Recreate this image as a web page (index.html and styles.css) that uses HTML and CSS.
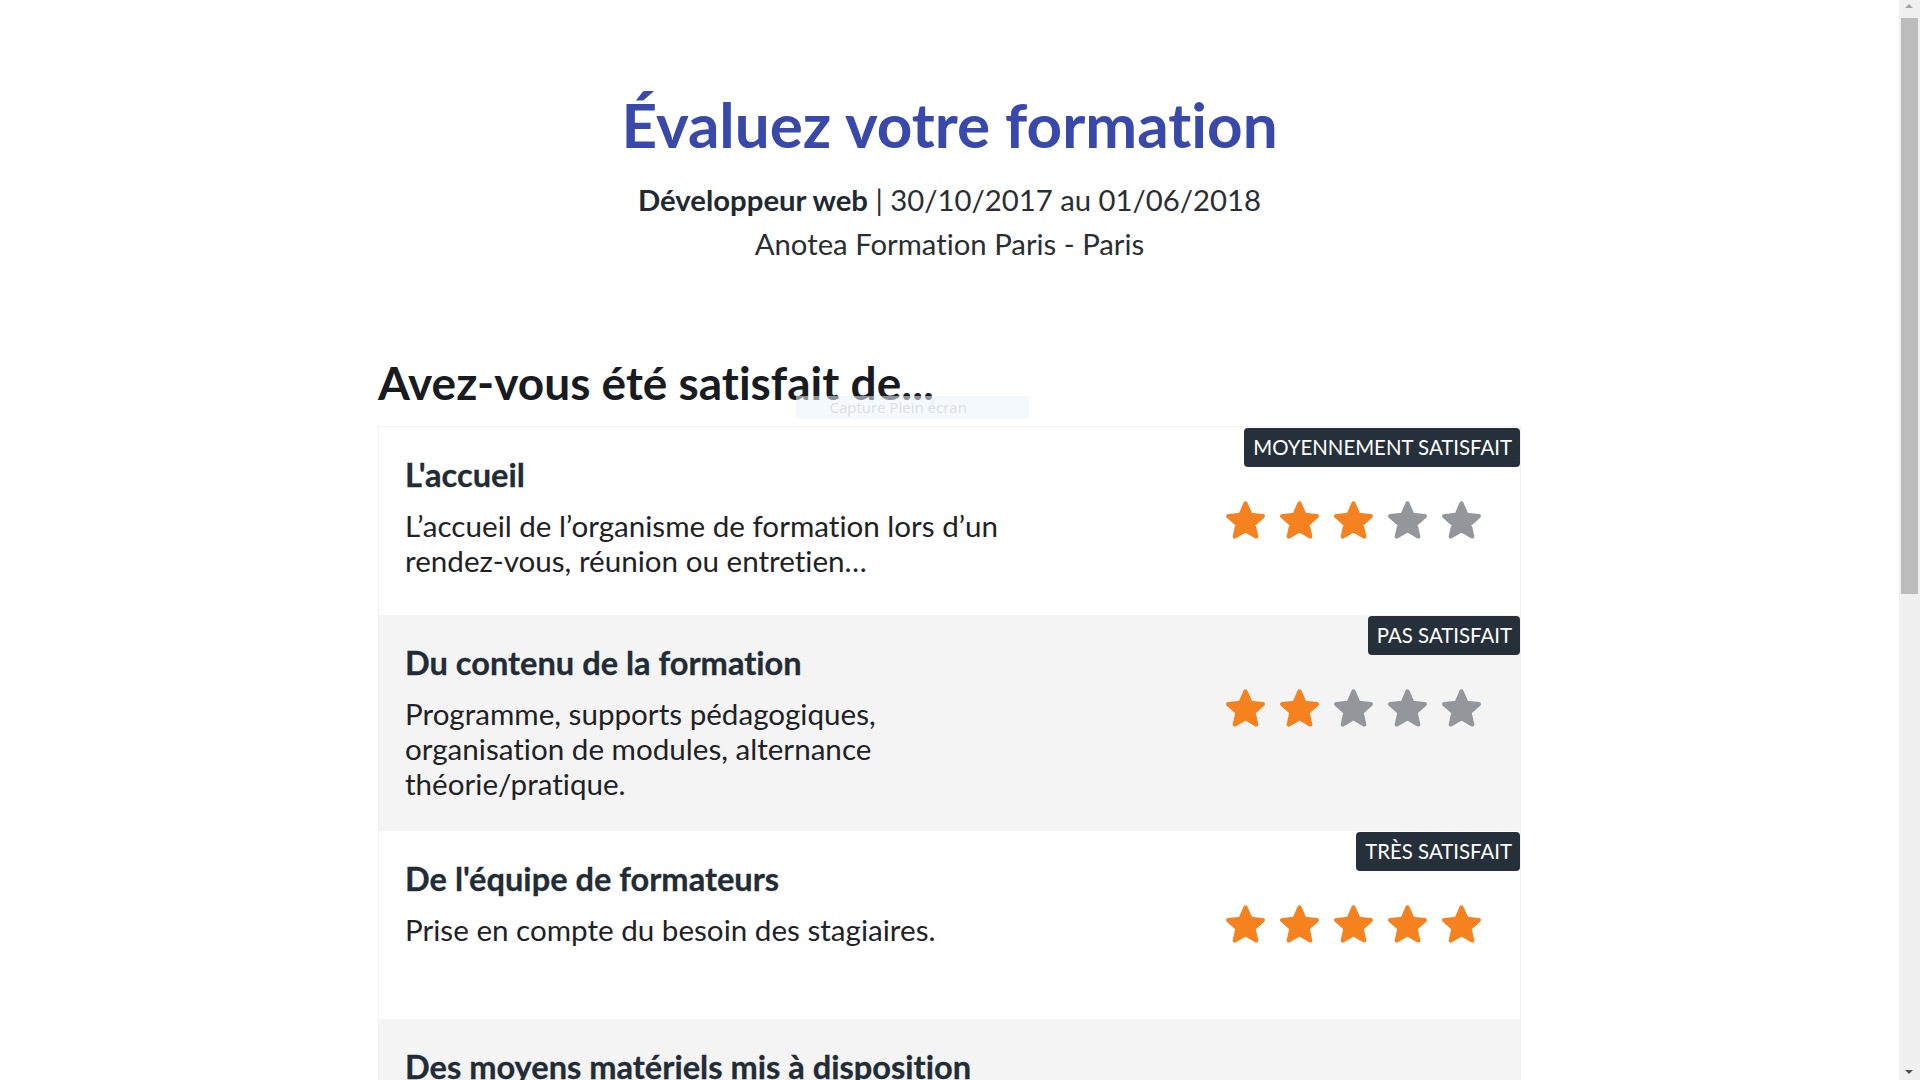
FILE: index.html
```html
<!DOCTYPE html>
<html lang="fr">
<head>
<meta charset="utf-8">
<title>Évaluez votre formation</title>
<link rel="stylesheet" href="styles.css">
</head>
<body>
<div class="page">
  <header class="intro">
    <h1 class="title">Évaluez votre formation</h1>
    <p class="subtitle"><strong>Développeur web</strong> | 30/10/2017 au 01/06/2018</p>
    <p class="subtitle">Anotea Formation Paris - Paris</p>
  </header>

  <main class="container">
    <h2 class="section-title">Avez-vous été satisfait de...</h2>

    <div class="card">
      <div class="row">
        <div class="row-text">
          <h3 class="row-title">L'accueil</h3>
          <p class="row-desc">L’accueil de l’organisme de formation lors d’un rendez-vous, réunion ou entretien…</p>
        </div>
        <span class="badge">MOYENNEMENT SATISFAIT</span>
        <div class="stars">
          <svg class="star on" viewBox="-10.75 -11.25 21.5 20.6"><path d="M0 -10L2.704 -3.721L9.511 -3.09L4.375 1.421L5.878 8.09L0 4.6L-5.878 8.09L-4.375 1.421L-9.511 -3.09L-2.704 -3.721Z"/></svg>
          <svg class="star on" viewBox="-10.75 -11.25 21.5 20.6"><path d="M0 -10L2.704 -3.721L9.511 -3.09L4.375 1.421L5.878 8.09L0 4.6L-5.878 8.09L-4.375 1.421L-9.511 -3.09L-2.704 -3.721Z"/></svg>
          <svg class="star on" viewBox="-10.75 -11.25 21.5 20.6"><path d="M0 -10L2.704 -3.721L9.511 -3.09L4.375 1.421L5.878 8.09L0 4.6L-5.878 8.09L-4.375 1.421L-9.511 -3.09L-2.704 -3.721Z"/></svg>
          <svg class="star" viewBox="-10.75 -11.25 21.5 20.6"><path d="M0 -10L2.704 -3.721L9.511 -3.09L4.375 1.421L5.878 8.09L0 4.6L-5.878 8.09L-4.375 1.421L-9.511 -3.09L-2.704 -3.721Z"/></svg>
          <svg class="star" viewBox="-10.75 -11.25 21.5 20.6"><path d="M0 -10L2.704 -3.721L9.511 -3.09L4.375 1.421L5.878 8.09L0 4.6L-5.878 8.09L-4.375 1.421L-9.511 -3.09L-2.704 -3.721Z"/></svg>
        </div>
      </div>

      <div class="row alt">
        <div class="row-text">
          <h3 class="row-title">Du contenu de la formation</h3>
          <p class="row-desc">Programme, supports pédagogiques, organisation de modules, alternance théorie/pratique.</p>
        </div>
        <span class="badge">PAS SATISFAIT</span>
        <div class="stars">
          <svg class="star on" viewBox="-10.75 -11.25 21.5 20.6"><path d="M0 -10L2.704 -3.721L9.511 -3.09L4.375 1.421L5.878 8.09L0 4.6L-5.878 8.09L-4.375 1.421L-9.511 -3.09L-2.704 -3.721Z"/></svg>
          <svg class="star on" viewBox="-10.75 -11.25 21.5 20.6"><path d="M0 -10L2.704 -3.721L9.511 -3.09L4.375 1.421L5.878 8.09L0 4.6L-5.878 8.09L-4.375 1.421L-9.511 -3.09L-2.704 -3.721Z"/></svg>
          <svg class="star" viewBox="-10.75 -11.25 21.5 20.6"><path d="M0 -10L2.704 -3.721L9.511 -3.09L4.375 1.421L5.878 8.09L0 4.6L-5.878 8.09L-4.375 1.421L-9.511 -3.09L-2.704 -3.721Z"/></svg>
          <svg class="star" viewBox="-10.75 -11.25 21.5 20.6"><path d="M0 -10L2.704 -3.721L9.511 -3.09L4.375 1.421L5.878 8.09L0 4.6L-5.878 8.09L-4.375 1.421L-9.511 -3.09L-2.704 -3.721Z"/></svg>
          <svg class="star" viewBox="-10.75 -11.25 21.5 20.6"><path d="M0 -10L2.704 -3.721L9.511 -3.09L4.375 1.421L5.878 8.09L0 4.6L-5.878 8.09L-4.375 1.421L-9.511 -3.09L-2.704 -3.721Z"/></svg>
        </div>
      </div>

      <div class="row">
        <div class="row-text">
          <h3 class="row-title">De l'équipe de formateurs</h3>
          <p class="row-desc">Prise en compte du besoin des stagiaires.</p>
        </div>
        <span class="badge">TRÈS SATISFAIT</span>
        <div class="stars">
          <svg class="star on" viewBox="-10.75 -11.25 21.5 20.6"><path d="M0 -10L2.704 -3.721L9.511 -3.09L4.375 1.421L5.878 8.09L0 4.6L-5.878 8.09L-4.375 1.421L-9.511 -3.09L-2.704 -3.721Z"/></svg>
          <svg class="star on" viewBox="-10.75 -11.25 21.5 20.6"><path d="M0 -10L2.704 -3.721L9.511 -3.09L4.375 1.421L5.878 8.09L0 4.6L-5.878 8.09L-4.375 1.421L-9.511 -3.09L-2.704 -3.721Z"/></svg>
          <svg class="star on" viewBox="-10.75 -11.25 21.5 20.6"><path d="M0 -10L2.704 -3.721L9.511 -3.09L4.375 1.421L5.878 8.09L0 4.6L-5.878 8.09L-4.375 1.421L-9.511 -3.09L-2.704 -3.721Z"/></svg>
          <svg class="star on" viewBox="-10.75 -11.25 21.5 20.6"><path d="M0 -10L2.704 -3.721L9.511 -3.09L4.375 1.421L5.878 8.09L0 4.6L-5.878 8.09L-4.375 1.421L-9.511 -3.09L-2.704 -3.721Z"/></svg>
          <svg class="star on" viewBox="-10.75 -11.25 21.5 20.6"><path d="M0 -10L2.704 -3.721L9.511 -3.09L4.375 1.421L5.878 8.09L0 4.6L-5.878 8.09L-4.375 1.421L-9.511 -3.09L-2.704 -3.721Z"/></svg>
        </div>
      </div>

      <div class="row alt">
        <div class="row-text">
          <h3 class="row-title">Des moyens matériels mis à disposition</h3>
          <p class="row-desc">Salles de cours, documentation, plateaux techniques, équipement informatique…</p>
        </div>
        <div class="stars">
          <svg class="star" viewBox="-10.75 -11.25 21.5 20.6"><path d="M0 -10L2.704 -3.721L9.511 -3.09L4.375 1.421L5.878 8.09L0 4.6L-5.878 8.09L-4.375 1.421L-9.511 -3.09L-2.704 -3.721Z"/></svg>
          <svg class="star" viewBox="-10.75 -11.25 21.5 20.6"><path d="M0 -10L2.704 -3.721L9.511 -3.09L4.375 1.421L5.878 8.09L0 4.6L-5.878 8.09L-4.375 1.421L-9.511 -3.09L-2.704 -3.721Z"/></svg>
          <svg class="star" viewBox="-10.75 -11.25 21.5 20.6"><path d="M0 -10L2.704 -3.721L9.511 -3.09L4.375 1.421L5.878 8.09L0 4.6L-5.878 8.09L-4.375 1.421L-9.511 -3.09L-2.704 -3.721Z"/></svg>
          <svg class="star" viewBox="-10.75 -11.25 21.5 20.6"><path d="M0 -10L2.704 -3.721L9.511 -3.09L4.375 1.421L5.878 8.09L0 4.6L-5.878 8.09L-4.375 1.421L-9.511 -3.09L-2.704 -3.721Z"/></svg>
          <svg class="star" viewBox="-10.75 -11.25 21.5 20.6"><path d="M0 -10L2.704 -3.721L9.511 -3.09L4.375 1.421L5.878 8.09L0 4.6L-5.878 8.09L-4.375 1.421L-9.511 -3.09L-2.704 -3.721Z"/></svg>
        </div>
      </div>

      <div class="row">
        <div class="row-text">
          <h3 class="row-title">De l'accompagnement</h3>
          <p class="row-desc">Accompagnement, suivi et conseils de l’organisme pendant la formation.</p>
        </div>
        <div class="stars">
          <svg class="star" viewBox="-10.75 -11.25 21.5 20.6"><path d="M0 -10L2.704 -3.721L9.511 -3.09L4.375 1.421L5.878 8.09L0 4.6L-5.878 8.09L-4.375 1.421L-9.511 -3.09L-2.704 -3.721Z"/></svg>
          <svg class="star" viewBox="-10.75 -11.25 21.5 20.6"><path d="M0 -10L2.704 -3.721L9.511 -3.09L4.375 1.421L5.878 8.09L0 4.6L-5.878 8.09L-4.375 1.421L-9.511 -3.09L-2.704 -3.721Z"/></svg>
          <svg class="star" viewBox="-10.75 -11.25 21.5 20.6"><path d="M0 -10L2.704 -3.721L9.511 -3.09L4.375 1.421L5.878 8.09L0 4.6L-5.878 8.09L-4.375 1.421L-9.511 -3.09L-2.704 -3.721Z"/></svg>
          <svg class="star" viewBox="-10.75 -11.25 21.5 20.6"><path d="M0 -10L2.704 -3.721L9.511 -3.09L4.375 1.421L5.878 8.09L0 4.6L-5.878 8.09L-4.375 1.421L-9.511 -3.09L-2.704 -3.721Z"/></svg>
          <svg class="star" viewBox="-10.75 -11.25 21.5 20.6"><path d="M0 -10L2.704 -3.721L9.511 -3.09L4.375 1.421L5.878 8.09L0 4.6L-5.878 8.09L-4.375 1.421L-9.511 -3.09L-2.704 -3.721Z"/></svg>
        </div>
      </div>
    </div>

    <div class="actions">
      <button class="btn" type="button">Suivant</button>
    </div>
  </main>

  <div class="capture">Capture Plein écran</div>
</div>

<div class="scrollbar" aria-hidden="true">
  <span class="sb-arrow up"></span>
  <span class="sb-thumb"></span>
  <span class="sb-arrow down"></span>
</div>
</body>
</html>
```
FILE: styles.css
```css
html, body {
  margin: 0;
  padding: 0;
  background: #ffffff;
}

body {
  font-family: "Lato", "Noto Sans", sans-serif;
  font-variant-ligatures: no-common-ligatures;
  color: #212529;
}

.page {
  position: relative;
  margin-right: 21px;
  padding-top: 87px;
  padding-bottom: 330px;
}

.intro {
  text-align: center;
}

.title {
  margin: 0;
  font-size: 62px;
  line-height: 1.2;
  font-weight: 700;
  color: #3949ab;
}

.subtitle {
  margin: 0;
  font-size: 29.3px;
  line-height: 44px;
  color: #2a2e33;
}
.title + .subtitle {
  margin-top: 17px;
}
.subtitle strong {
  font-weight: 700;
  color: #212830;
}

.container {
  width: 1143px;
  margin: 0 auto;
}

.section-title {
  margin: 89px 0 15px;
  font-size: 46px;
  line-height: 1.2;
  font-weight: 700;
  color: #181b1f;
}

.card {
  border: 1px solid #f0f0f0;
}

.row {
  position: relative;
  display: flex;
  justify-content: space-between;
  align-items: flex-start;
  min-height: 188px;
  box-sizing: border-box;
  padding: 28px 39px 30px 26px;
  background: #ffffff;
}
.row.alt {
  background: #f4f4f4;
}

.row-text {
  width: 620px;
}

.row-title {
  margin: 0;
  font-size: 32.6px;
  line-height: 1.2;
  font-weight: 700;
  color: #222c36;
  -webkit-text-stroke: 0.3px #222c36;
}

.row-desc {
  margin: 14px 0 0;
  font-size: 29.6px;
  line-height: 35px;
  color: #1e2226;
}

.badge {
  position: absolute;
  top: 1px;
  right: 0;
  padding: 4px 8px 5px 9px;
  font-size: 20.4px;
  line-height: 30px;
  color: #ffffff;
  background: #25303a;
  border-radius: 4px;
}

.stars {
  display: flex;
  gap: 15px;
  margin-top: 46px;
}

.star {
  width: 39px;
  height: 38px;
  display: block;
}
.star path {
  fill: #93979c;
  stroke: #93979c;
  stroke-width: 2.4;
  stroke-linejoin: round;
}
.star.on path {
  fill: #f5821f;
  stroke: #f5821f;
}

.actions {
  display: flex;
  justify-content: center;
  margin-top: 70px;
}

.btn {
  font-family: "Lato", "Noto Sans", sans-serif;
  font-size: 26px;
  font-weight: 700;
  color: #ffffff;
  background: #3949ab;
  border: 0;
  border-radius: 4px;
  padding: 18px 48px;
}

.capture {
  position: absolute;
  top: 396px;
  left: calc(50% - 154px);
  width: 233px;
  height: 23px;
  box-sizing: border-box;
  padding-left: 34px;
  background: rgba(235, 244, 253, 0.55);
  font-family: "Open Sans", "DejaVu Sans", sans-serif;
  font-size: 15px;
  line-height: 23px;
  color: #dedede;
}

.scrollbar {
  position: fixed;
  top: 0;
  right: 0;
  width: 21px;
  height: 100vh;
  background: #f0f0f0;
}
.sb-thumb {
  position: absolute;
  top: 18px;
  left: 2px;
  width: 17px;
  height: 576px;
  background: #bcbcbc;
}
.sb-arrow {
  position: absolute;
  left: 6px;
  width: 0;
  height: 0;
  border-left: 4px solid transparent;
  border-right: 4px solid transparent;
}
.sb-arrow.up {
  top: 4px;
  border-bottom: 4px solid #a3a3a3;
}
.sb-arrow.down {
  bottom: 6px;
  border-top: 4px solid #505050;
}
```
